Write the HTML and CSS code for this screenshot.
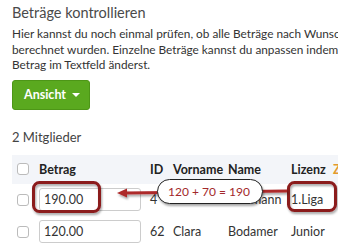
FILE: index.html
```html
<!DOCTYPE html>
<html lang="de">
<head>
  <meta charset="UTF-8" />
  <title>Beträge kontrollieren</title>
  <link rel="stylesheet" href="styles.css">
</head>
<body>

<div class="page">
  <h2 class="title">Beträge kontrollieren</h2>
  <p class="intro">
    Hier kannst du noch einmal prüfen, ob alle Beträge nach Wunsch<br>
    berechnet wurden. Einzelne Beträge kannst du anpassen indem du den<br>
    Betrag im Textfeld änderst.
  </p>

  <button class="btn-green">Ansicht <span class="caret"></span></button>

  <h3 class="count">2 Mitglieder</h3>

  <table class="members">
    <colgroup>
      <col class="col-check">
      <col class="col-amount">
      <col class="col-id">
      <col class="col-first">
      <col class="col-last">
      <col class="col-license">
      <col class="col-more">
    </colgroup>
    <thead>
      <tr>
        <th><span class="check"></span></th>
        <th>Betrag</th>
        <th>ID</th>
        <th>Vorname</th>
        <th>Name</th>
        <th>Lizenz</th>
        <th class="sortable">Zahlung</th>
      </tr>
    </thead>
    <tbody>
      <tr>
        <td><span class="check"></span></td>
        <td><input class="amount" type="text" value="190.00"></td>
        <td>4</td>
        <td></td>
        <td>Neumann</td>
        <td>1.Liga</td>
        <td></td>
      </tr>
      <tr>
        <td><span class="check"></span></td>
        <td><input class="amount" type="text" value="120.00"></td>
        <td>62</td>
        <td>Clara</td>
        <td>Bodamer</td>
        <td>Junior</td>
        <td></td>
      </tr>
    </tbody>
  </table>

  <!-- Anmerkungen über der Tabelle -->
  <svg class="annotations" width="338" height="250" viewBox="0 0 338 250">
    <defs>
      <filter id="shadow" x="-20%" y="-30%" width="140%" height="160%">
        <feDropShadow dx="1" dy="2" stdDeviation="1.2" flood-color="#000" flood-opacity="0.35"/>
      </filter>
    </defs>
    <rect x="33.5" y="182.5" width="66" height="29" rx="6" fill="none" stroke="#8b1a1f" stroke-width="3" filter="url(#shadow)"/>
    <rect x="288.5" y="182.5" width="47" height="28" rx="6" fill="none" stroke="#8b1a1f" stroke-width="3" filter="url(#shadow)"/>
    <g filter="url(#shadow)">
      <line x1="287" y1="191" x2="126" y2="193" stroke="#ad2a2c" stroke-width="3"/>
      <polygon points="117,193 127,188.5 127,197.5" fill="#ad2a2c"/>
    </g>
    <rect x="157.5" y="179.5" width="105" height="24" rx="12" fill="#fff" stroke="#222" stroke-width="1" filter="url(#shadow)"/>
    <text class="callout-text" x="168" y="196">120 + 70 = 190</text>
  </svg>
</div>

</body>
</html>
```

FILE: styles.css
```css
:root {
  --text: #333;
  --heading: #4a4a4a;
  --green: #5aa91f;
  --green-dark: #4d9617;
  --band: #f3f5f9;
  --orange: #e39a2d;
}

* {
  box-sizing: border-box;
}

html,
body {
  margin: 0;
  overflow: hidden;
}

body {
  font-family: Lato, 'Open Sans', sans-serif;
  color: var(--text);
  background: #fff;
}

.page {
  position: relative;
  padding: 0 12px;
  width: 338px;
  height: 250px;
}

.title {
  margin: 0;
  padding-top: 4px;
  font-size: 14.5px;
  line-height: 18px;
  font-weight: 400;
  color: var(--heading);
}

.intro {
  margin: 4px 0 0;
  font-size: 11.8px;
  line-height: 15.5px;
  white-space: nowrap;
  color: #333;
}

.btn-green {
  margin-top: 7px;
  width: 78px;
  height: 30px;
  padding: 0 0 0 2px;
  display: flex;
  align-items: center;
  justify-content: center;
  gap: 6px;
  background-color: var(--green);
  border: 1px solid var(--green-dark);
  border-radius: 3px;
  color: #fff;
  font-family: inherit;
  font-size: 12.5px;
  font-weight: 700;
}

.caret {
  width: 0;
  height: 0;
  border-left: 4px solid transparent;
  border-right: 4px solid transparent;
  border-top: 4px solid #fff;
}

.count {
  margin: 19px 0 0;
  font-size: 13px;
  line-height: 16px;
  font-weight: 400;
  color: #444;
}

/* Mitglieder-Tabelle */
.members {
  margin-top: 10px;
  width: 377px;
  table-layout: fixed;
  border-collapse: collapse;
  font-size: 12.5px;
}

.col-check { width: 23px; }
.col-amount { width: 111px; }
.col-id { width: 23px; }
.col-first { width: 55px; }
.col-last { width: 63px; }
.col-license { width: 42px; }
.col-more { width: 60px; }

.members th,
.members td {
  padding: 0 4px;
  text-align: left;
  white-space: nowrap;
  overflow: hidden;
}

.members th:first-child,
.members td:first-child {
  padding-left: 5px;
}

.members thead tr {
  height: 29px;
  background: var(--band);
}

.members th {
  font-weight: 700;
  color: #222;
}

.members th.sortable {
  color: var(--orange);
}

.members tbody tr {
  height: 32px;
}

.check {
  display: block;
  width: 12px;
  height: 12px;
  border: 1px solid #bbb;
  border-radius: 3px;
  background: #fff;
}

.amount {
  display: block;
  width: 102px;
  height: 23px;
  padding: 0 4px;
  border: 1px solid #ccc;
  border-radius: 3px;
  font-family: inherit;
  font-size: 12.5px;
  color: var(--text);
}

.annotations {
  position: absolute;
  top: 0;
  left: 0;
}

.callout-text {
  font-family: Lato, 'Open Sans', sans-serif;
  font-size: 12px;
  fill: #a3282b;
}
```
